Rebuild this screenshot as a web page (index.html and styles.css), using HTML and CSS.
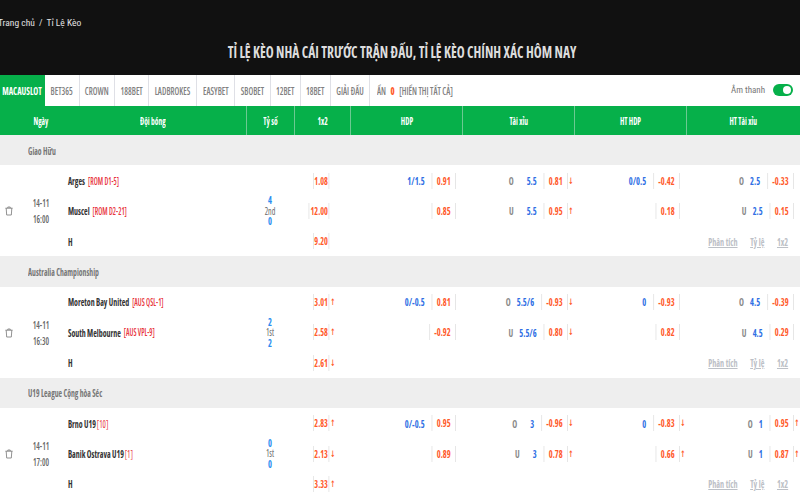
FILE: index.html
```html
<!DOCTYPE html>
<html lang="vi">
<head>
<meta charset="utf-8">
<title>Tỉ lệ kèo</title>
<link rel="stylesheet" href="styles.css">
</head>
<body>
<header class="hero">
  <nav class="crumb"><span>Trang chủ</span><span class="slash">/</span><span>Tỉ Lệ Kèo</span></nav>
  <h1>TỈ LỆ KÈO NHÀ CÁI TRƯỚC TRẬN ĐẤU, TỈ LỆ KÈO CHÍNH XÁC HÔM NAY</h1>
</header>
<div class="tabs">
  <a class="tab t1 on"><span>MACAUSLOT</span></a>
  <a class="tab t2"><span>BET365</span></a>
  <a class="tab t3"><span>CROWN</span></a>
  <a class="tab t4"><span>188BET</span></a>
  <a class="tab t5"><span>LADBROKES</span></a>
  <a class="tab t6"><span>EASYBET</span></a>
  <a class="tab t7"><span>SBOBET</span></a>
  <a class="tab t8"><span>12BET</span></a>
  <a class="tab t9"><span>18BET</span></a>
  <a class="tab t10"><span>GIẢI ĐẤU</span></a>
  <div class="hidden-info"><span>ẨN</span> <b>0</b> <span>[HIỂN THỊ TẤT CẢ]</span></div>
  <div class="sound">Âm thanh <span class="toggle"><i></i></span></div>
</div>
<div class="grid thead">
  <div class="th first"></div>
  <div class="th"><span>Ngày</span></div>
  <div class="th"><span>Đội bóng</span></div>
  <div class="th sep"><span>Tỷ số</span></div>
  <div class="th sep"><span>1x2</span></div>
  <div class="th sep"><span>HDP</span></div>
  <div class="th sep"><span>Tài xỉu</span></div>
  <div class="th sep"><span>HT HDP</span></div>
  <div class="th sep"><span>HT Tài xỉu</span></div>
</div>

<div class="league"><span>Giao Hữu</span></div>
<div class="grid match">
  <div class="trash"><svg viewBox="0 0 10 12" width="8" height="10"><path d="M.5 2.500h9M3.500 2.500V1h3v1.500M1.500 2.500l.6 8.500h5.800l.6-8.500" fill="none" stroke="#777" stroke-width="1"/></svg></div>
  <div class="date">14-11<br>16:00</div>
  <div class="team">Arges <em>[ROM D1-5]</em></div>
  <div class="score"><b>4</b><span>2nd</span><b>0</b></div>
  <div class="odd x12"><span class="pr plain">1.08</span><i class="ar"></i></div>
  <div class="odd"><span class="ln">1/1.5</span><span class="pr">0.91</span><i class="ar"></i></div>
  <div class="odd"><span class="sd far">O</span><span class="ln">5.5</span><span class="pr">0.81</span><i class="ar">↓</i></div>
  <div class="odd"><span class="ln">0/0.5</span><span class="pr">-0.42</span><i class="ar"></i></div>
  <div class="odd"><span class="sd">O</span><span class="ln">2.5</span><span class="pr">-0.33</span><i class="ar"></i></div>

  <div class="team">Muscel <em>[ROM D2-21]</em></div>
  <div class="odd x12"><span class="pr plain">12.00</span><i class="ar"></i></div>
  <div class="odd"><span class="pr">0.85</span><i class="ar"></i></div>
  <div class="odd"><span class="sd far">U</span><span class="ln">5.5</span><span class="pr">0.95</span><i class="ar">↑</i></div>
  <div class="odd"><span class="pr">0.18</span><i class="ar"></i></div>
  <div class="odd"><span class="sd">U</span><span class="ln">2.5</span><span class="pr">0.15</span><i class="ar"></i></div>

  <div class="team">H</div>
  <div class="odd x12"><span class="pr plain">9.20</span><i class="ar"></i></div>
  <div class="links"><a>Phân tích</a><a>Tỷ lệ</a><a>1x2</a></div>
</div>

<div class="league"><span>Australia Championship</span></div>
<div class="grid match">
  <div class="trash"><svg viewBox="0 0 10 12" width="8" height="10"><path d="M.5 2.500h9M3.500 2.500V1h3v1.500M1.500 2.500l.6 8.500h5.800l.6-8.500" fill="none" stroke="#777" stroke-width="1"/></svg></div>
  <div class="date">14-11<br>16:30</div>
  <div class="team">Moreton Bay United <em>[AUS QSL-1]</em></div>
  <div class="score"><b>2</b><span>1st</span><b>2</b></div>
  <div class="odd x12"><span class="pr plain">3.01</span><i class="ar">↑</i></div>
  <div class="odd"><span class="ln">0/-0.5</span><span class="pr">0.81</span><i class="ar"></i></div>
  <div class="odd"><span class="sd">O</span><span class="ln">5.5/6</span><span class="pr">-0.93</span><i class="ar">↓</i></div>
  <div class="odd"><span class="ln">0</span><span class="pr">-0.93</span><i class="ar"></i></div>
  <div class="odd"><span class="sd">O</span><span class="ln">4.5</span><span class="pr">-0.39</span><i class="ar"></i></div>

  <div class="team">South Melbourne <em>[AUS VPL-9]</em></div>
  <div class="odd x12"><span class="pr plain">2.58</span><i class="ar">↑</i></div>
  <div class="odd"><span class="pr">-0.92</span><i class="ar"></i></div>
  <div class="odd"><span class="sd">U</span><span class="ln">5.5/6</span><span class="pr">0.80</span><i class="ar">↓</i></div>
  <div class="odd"><span class="pr">0.82</span><i class="ar"></i></div>
  <div class="odd"><span class="sd">U</span><span class="ln">4.5</span><span class="pr">0.29</span><i class="ar"></i></div>

  <div class="team">H</div>
  <div class="odd x12"><span class="pr plain">2.61</span><i class="ar">↓</i></div>
  <div class="links"><a>Phân tích</a><a>Tỷ lệ</a><a>1x2</a></div>
</div>

<div class="league"><span>U19 League Cộng hòa Séc</span></div>
<div class="grid match">
  <div class="trash"><svg viewBox="0 0 10 12" width="8" height="10"><path d="M.5 2.500h9M3.500 2.500V1h3v1.500M1.500 2.500l.6 8.500h5.800l.6-8.500" fill="none" stroke="#777" stroke-width="1"/></svg></div>
  <div class="date">14-11<br>17:00</div>
  <div class="team">Brno U19<em class="tight">[10]</em></div>
  <div class="score"><b>0</b><span>1st</span><b>0</b></div>
  <div class="odd x12"><span class="pr plain">2.83</span><i class="ar">↑</i></div>
  <div class="odd"><span class="ln">0/-0.5</span><span class="pr">0.95</span><i class="ar"></i></div>
  <div class="odd"><span class="sd far">O</span><span class="ln">3</span><span class="pr">-0.96</span><i class="ar">↓</i></div>
  <div class="odd"><span class="ln">0</span><span class="pr">-0.83</span><i class="ar">↓</i></div>
  <div class="odd"><span class="sd">O</span><span class="ln">1</span><span class="pr">0.95</span><i class="ar">↑</i></div>

  <div class="team">Banik Ostrava U19<em class="tight">[1]</em></div>
  <div class="odd x12"><span class="pr plain">2.13</span><i class="ar">↓</i></div>
  <div class="odd"><span class="pr">0.89</span><i class="ar"></i></div>
  <div class="odd"><span class="sd far">U</span><span class="ln">3</span><span class="pr">0.78</span><i class="ar">↑</i></div>
  <div class="odd"><span class="pr">0.66</span><i class="ar">↑</i></div>
  <div class="odd"><span class="sd">U</span><span class="ln">1</span><span class="pr">0.87</span><i class="ar">↑</i></div>

  <div class="team">H</div>
  <div class="odd x12"><span class="pr plain">3.33</span><i class="ar">↑</i></div>
  <div class="links"><a>Phân tích</a><a>Tỷ lệ</a><a>1x2</a></div>
</div>
</body>
</html>
```

FILE: styles.css
```css
* { box-sizing: border-box; }
html, body { margin: 0; height: 500px; overflow: hidden; }
body {
  width: 800px;
  background: #fff;
  font-family: "Open Sans", "Liberation Sans", sans-serif;
  font-stretch: 75%;
  font-size: 11px;
  color: #333;
}
.hero {
  height: 75px;
  background: #111;
  color: #ddd;
  display: flex;
  flex-direction: column;
  padding-top: 17px;
}
.crumb {
  display: flex;
  font-family: Roboto, sans-serif;
  font-stretch: 80%;
  font-size: 9.5px;
  line-height: 12px;
  color: #e2e2e2;
  margin-left: -2px;
}
.slash { margin: 0 4px; }
h1 {
  margin: 12px 0 0 4px;
  text-align: center;
  font-size: 16px;
  line-height: 22px;
  font-weight: 700;
  color: #ddd;
  transform: scaleX(.842);
  white-space: nowrap;
}
.tabs {
  height: 31px;
  display: flex;
  align-items: stretch;
  background: #fff;
}
.tab {
  display: flex;
  align-items: center;
  justify-content: center;
  border-right: 1px solid #dfe0e6;
  font-size: 11px;
  font-weight: 600;
  color: #808080;
  white-space: nowrap;
}
.tab span { display: block; transform: scaleX(.76); }
.tab.on { background: #06b04a; color: #fff; font-weight: 700; border-right: 0; }
.t1 { width: 45px; }
.t2, .t3 { width: 35px; }
.t4 { width: 34px; }
.t5 { width: 48px; }
.t6 { width: 38px; }
.t7 { width: 36px; }
.t8, .t9 { width: 30px; }
.t10 { width: 39px; }
.hidden-info {
  margin-left: 7px;
  display: flex;
  align-items: center;
  gap: 6px;
  color: #808080;
  font-weight: 600;
  white-space: pre;
  font-size: 11px;
  transform: scaleX(.76);
  transform-origin: 0 50%;
}
.hidden-info b { color: #ff5a2b; }
.sound {
  margin-left: auto;
  padding-right: 7px;
  display: flex;
  align-items: center;
  gap: 8px;
  font-family: Roboto, sans-serif;
  font-stretch: 80%;
  font-size: 9px;
  color: #777;
  padding-bottom: 2px;
}
.toggle {
  width: 20px;
  height: 12px;
  border-radius: 6px;
  background: #06b04a;
  display: flex;
  justify-content: flex-end;
  align-items: center;
  padding-right: 2px;
}
.toggle i { width: 8px; height: 8px; border-radius: 50%; background: #fff; }
.grid {
  display: grid;
  grid-template-columns: 22px 38px 186px 48px 56px 112px 112px 112px 114px;
}
.thead {
  height: 29px;
  background: #06b04a;
  color: #fff;
  font-weight: 700;
  font-size: 11px;
}
.th { display: flex; align-items: center; justify-content: center; white-space: nowrap; }
.th span { display: block; transform: scaleX(.68); }
.th.sep { border-left: 1px solid #6cc992; }
.league {
  height: 30.4px;
  background: #eee;
  display: flex;
  align-items: center;
  padding-left: 28px;
  font-weight: 700;
  color: #777;
  font-size: 11px;
}
.league span { display: block; transform: scaleX(.7); transform-origin: 0 50%; white-space: nowrap; }
.match {
  grid-template-rows: repeat(3, 30.33px);
  height: 91px;
  background: #fff;
}
.trash {
  grid-row: 1 / 4;
  grid-column: 1;
  display: flex;
  align-items: center;
  justify-content: center;
  padding-right: 4px;
}
.trash svg { display: block; margin-top: 1px; }
.date {
  grid-row: 1 / 4;
  grid-column: 2;
  align-self: center;
  text-align: center;
  font-size: 11px;
  line-height: 16px;
  font-weight: 600;
  color: #666;
  margin-top: 1px;
  transform: scaleX(.72);
}
.team {
  grid-column: 3;
  display: flex;
  align-items: center;
  padding-left: 11px;
  gap: 4px;
  font-weight: 700;
  font-size: 11px;
  color: #333;
  white-space: nowrap;
  transform: scaleX(.72);
  transform-origin: 0 50%;
}
.team em {
  font-style: normal;
  font-weight: 600;
  font-size: 10px;
  color: #e8343c;
}
.team em.tight { margin-left: -3px; font-size: 11px; font-weight: 400; }
.score {
  grid-row: 1 / 4;
  grid-column: 4;
  align-self: center;
  display: flex;
  flex-direction: column;
  align-items: center;
  line-height: 10.5px;
  font-size: 10.5px;
  color: #666;
  transform: scaleX(.76);
}
.score b { color: #2a8cf0; font-size: 11px; }
.odd {
  display: flex;
  align-items: center;
  justify-content: flex-end;
  font-size: 11px;
  font-weight: 700;
  white-space: nowrap;
  transform: scaleX(.76);
  transform-origin: 100% 50%;
}
.ln { color: #2f6fe4; padding-right: 9.5px; }
.sd { color: #888; margin-right: 8px; }
.sd.far { margin-right: 17px; }
.pr {
  color: #ff5a2b;
  height: 16px;
  line-height: 16px;
  padding: 0 5.5px;
  border-left: 1px solid #dfdfdf;
  border-right: 1px solid #dfdfdf;
}
.pr.plain { padding: 0 1.3px; }
.ar {
  width: 8.4px;
  font-family: "DejaVu Sans", sans-serif;
  font-style: normal;
  font-weight: 700;
  font-size: 9px;
  color: #ff5a2b;
  text-align: center;
  flex: none;
}
.x12 { padding-right: 19px; transform: scaleX(.74); }
.x12 .ar { width: 8.6px; }
.links {
  grid-column: 6 / 10;
  display: flex;
  align-items: center;
  justify-content: flex-end;
  gap: 17px;
  padding-right: 16px;
  font-weight: 700;
  font-size: 11px;
  color: #bcc0c6;
  white-space: nowrap;
  transform: scaleX(.74);
  transform-origin: 100% 50%;
}
.links a { text-decoration: underline; }
```
